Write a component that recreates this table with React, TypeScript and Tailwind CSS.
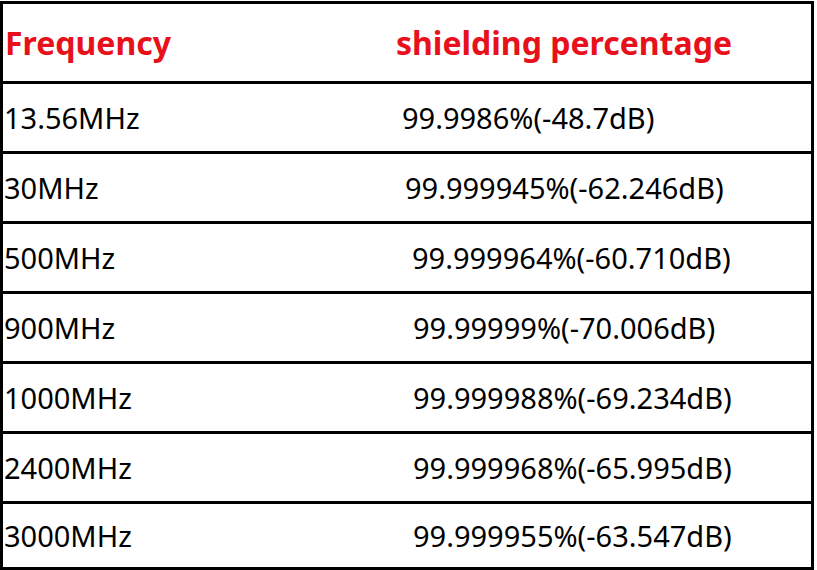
import React from 'react';

type Row = { freq: string; value: string; pad: string; h: string };

const rows: Row[] = [
  { freq: '13.56MHz', value: '99.9986%(-48.7dB)', pad: 'pl-[3px]', h: 'h-[70px]' },
  { freq: '30MHz', value: '99.999945%(-62.246dB)', pad: 'pl-[6px]', h: 'h-[70px]' },
  { freq: '500MHz', value: '99.999964%(-60.710dB)', pad: 'pl-[13px]', h: 'h-[70px]' },
  { freq: '900MHz', value: '99.99999%(-70.006dB)', pad: 'pl-[14px]', h: 'h-[70px]' },
  { freq: '1000MHz', value: '99.999988%(-69.234dB)', pad: 'pl-[14px]', h: 'h-[70px]' },
  { freq: '2400MHz', value: '99.999968%(-65.995dB)', pad: 'pl-[14px]', h: 'h-[70px]' },
  { freq: '3000MHz', value: '99.999955%(-63.547dB)', pad: 'pl-[14px]', h: 'h-[66px]' },
];

const App: React.FC = () => {
  return (
    <div className="min-h-screen bg-white pt-px" style={{ fontFamily: '"Noto Sans", "Open Sans", sans-serif' }}>
      <div className="w-[814px] border-[3px] border-black border-b-0">
        <div className="flex items-center h-[80px] border-b-[3px] border-black text-[32px] font-bold text-[#e8111b]">
          <span className="w-[393px] shrink-0 pl-[2px]">Frequency</span>
          <span>shielding percentage</span>
        </div>
        {rows.map((r) => (
          <div key={r.freq} className={`${r.h} flex items-center border-b-[3px] border-black text-[29px] text-black`}>
            <span className="w-[396px] shrink-0 pl-px">{r.freq}</span>
            <span className={r.pad}>{r.value}</span>
          </div>
        ))}
      </div>
    </div>
  );
};

export default App;
